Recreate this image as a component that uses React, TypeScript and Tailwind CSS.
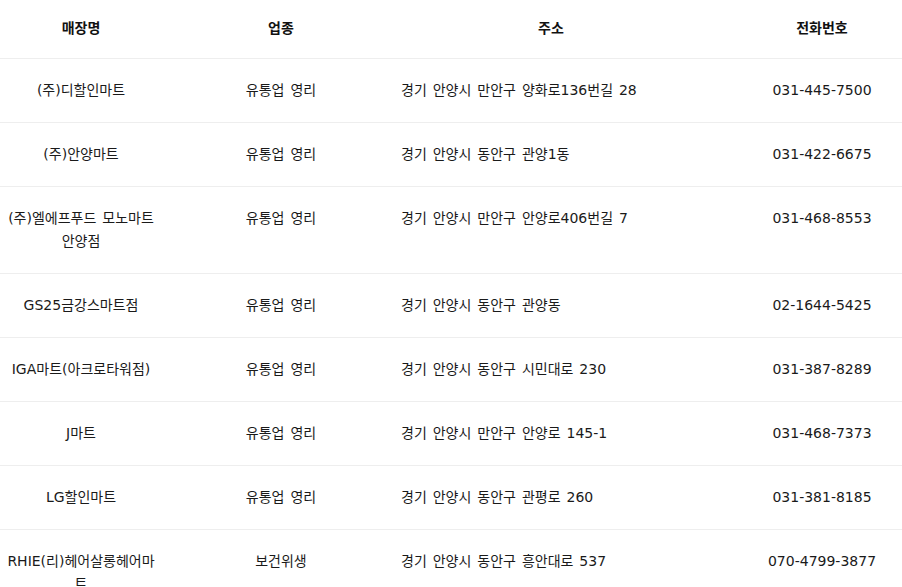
import React from "react";

const rows: [string, string, string, string][] = [
  ["(주)디할인마트", "유통업 영리", "경기 안양시 만안구 양화로136번길 28", "031-445-7500"],
  ["(주)안양마트", "유통업 영리", "경기 안양시 동안구 관양1동", "031-422-6675"],
  ["(주)엘에프푸드 모노마트 안양점", "유통업 영리", "경기 안양시 만안구 안양로406번길 7", "031-468-8553"],
  ["GS25금강스마트점", "유통업 영리", "경기 안양시 동안구 관양동", "02-1644-5425"],
  ["IGA마트(아크로타워점)", "유통업 영리", "경기 안양시 동안구 시민대로 230", "031-387-8289"],
  ["J마트", "유통업 영리", "경기 안양시 만안구 안양로 145-1", "031-468-7373"],
  ["LG할인마트", "유통업 영리", "경기 안양시 동안구 관평로 260", "031-381-8185"],
  ["RHIE(리)헤어살롱헤어마트", "보건위생", "경기 안양시 동안구 흥안대로 537", "070-4799-3877"],
];

export default function App() {
  return (
    <div
      className="w-[902px] h-[587px] overflow-hidden bg-white text-[14px] leading-[23px] text-[#1a1a1a] [word-spacing:1.5px]"
      style={{ fontFamily: '"DejaVu Sans", "Noto Sans CJK KR", sans-serif' }}
    >
      <div className="grid grid-cols-[162px_238px_342px_160px] border-b border-[#eeeeee] font-bold text-[#111]">
        <div className="pt-[17px] pb-[18px] text-center">매장명</div>
        <div className="pt-[17px] pb-[18px] text-center">업종</div>
        <div className="pt-[17px] pb-[18px] pr-[40px] text-center">주소</div>
        <div className="pt-[17px] pb-[18px] text-center">전화번호</div>
      </div>
      {rows.map((r, i) => (
        <div
          key={i}
          className="grid grid-cols-[162px_238px_342px_160px] border-b border-[#eeeeee]"
        >
          <div className="py-5 px-[6px] text-center break-all">{r[0]}</div>
          <div className="py-5 text-center">{r[1]}</div>
          <div className="py-5 pl-[1px] text-left">{r[2]}</div>
          <div className="py-5 text-center">{r[3]}</div>
        </div>
      ))}
    </div>
  );
}
